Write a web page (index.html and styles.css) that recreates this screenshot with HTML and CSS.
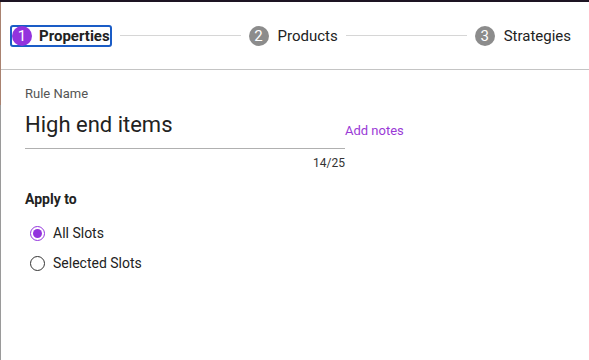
FILE: index.html
```html
<!DOCTYPE html>
<html lang="en">
<head>
  <meta charset="UTF-8">
  <meta name="viewport" content="width=device-width, initial-scale=1.0">
  <title>New Rule</title>
  <link rel="stylesheet" href="styles.css">
</head>
<body>
  <div class="dialog">
    <div class="stepper">
      <div class="step active">
        <span class="step-num">1</span>
        <span class="step-label">Properties</span>
      </div>
      <div class="step-line"></div>
      <div class="step">
        <span class="step-num">2</span>
        <span class="step-label">Products</span>
      </div>
      <div class="step-line"></div>
      <div class="step">
        <span class="step-num">3</span>
        <span class="step-label">Strategies</span>
      </div>
    </div>

    <div class="content">
      <div class="field-label">Rule Name</div>
      <div class="field-row">
        <div class="field">
          <div class="field-input">High end items</div>
        </div>
        <a class="add-notes">Add notes</a>
      </div>
      <div class="counter">14/25</div>

      <div class="section-title">Apply to</div>
      <label class="radio">
        <span class="radio-circle checked"></span>
        All Slots
      </label>
      <label class="radio">
        <span class="radio-circle"></span>
        Selected Slots
      </label>
    </div>
  </div>
</body>
</html>
```

FILE: styles.css
```css
* {
  margin: 0;
  padding: 0;
  box-sizing: border-box;
}

body {
  font-family: Roboto, "Noto Sans", Arial, sans-serif;
  height: 360px;
  overflow: hidden;
  background: linear-gradient(to bottom, #a98270 0 105px, #9a9a9a 105px);
  border-top: 2px solid #1d1423;
}

.dialog {
  margin-left: 1px;
  height: 100%;
  background: #fff;
  color: #222;
}

.stepper {
  display: flex;
  align-items: center;
  height: 68px;
  padding: 0 18px 0 9px;
  border-bottom: 1px solid #c4c4c4;
}

.step {
  display: flex;
  align-items: center;
  gap: 9px;
  font-size: 15px;
  color: #222;
  height: 22px;
}

.step.active {
  border: 2px solid #1a5cc6;
  border-radius: 3px;
  gap: 7px;
}

.step-num {
  width: 20px;
  height: 20px;
  border-radius: 50%;
  background: #8c8c8c;
  color: #fff;
  font-size: 15px;
  display: flex;
  align-items: center;
  justify-content: center;
}

.step.active .step-num {
  background: #9333dd;
}

.step.active .step-label {
  font-weight: bold;
}

.step-line {
  flex: 1;
  height: 1px;
  background: #d6d6d6;
  margin: 0 8px 0 8px;
}

.content {
  padding: 16px 24px 0 24px;
}

.field-label {
  font-size: 13px;
  line-height: 16px;
  color: #555;
}

.field-row {
  display: flex;
  align-items: center;
  margin-top: 8px;
}

.field {
  width: 320px;
  border-bottom: 1px solid #b0b0b0;
  padding-bottom: 8px;
}

.field-input {
  font-size: 22px;
  line-height: 30px;
  color: #222;
}

.add-notes {
  font-size: 13px;
  color: #9a3ad6;
  margin-top: 1px;
}

.counter {
  width: 320px;
  text-align: right;
  font-size: 12px;
  line-height: 14px;
  color: #333;
  margin-top: 7px;
}

.section-title {
  font-size: 14px;
  font-weight: bold;
  line-height: 18px;
  margin-top: 20px;
}

.radio {
  display: flex;
  align-items: center;
  gap: 8px;
  height: 30px;
  padding-left: 5px;
  font-size: 14px;
  color: #222;
}

.radio:first-of-type {
  margin-top: 10px;
}

.radio-circle {
  width: 15px;
  height: 15px;
  border-radius: 50%;
  border: 1.5px solid #333;
  display: flex;
  align-items: center;
  justify-content: center;
}

.radio-circle.checked {
  border-color: #9333dd;
}

.radio-circle.checked::after {
  content: "";
  width: 9px;
  height: 9px;
  border-radius: 50%;
  background: #9333dd;
}
```
